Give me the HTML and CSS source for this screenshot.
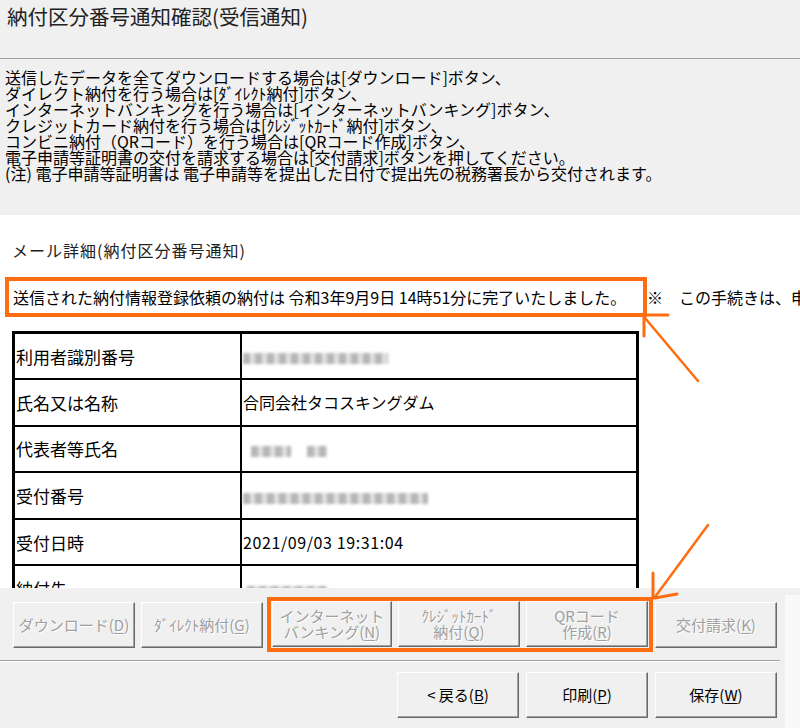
FILE: index.html
```html
<!DOCTYPE html>
<html lang="ja">
<head>
    <meta charset="UTF-8">
    <meta name="viewport" content="width=device-width, initial-scale=1.0">
    <title>納付区分番号通知確認(受信通知)</title>
    <link rel="stylesheet" href="styles.css">
</head>

<body>
    <div class="title-bar">
        <h1>納付区分番号通知確認(受信通知)</h1>
    </div>

    <div class="notes">
        <p>送信したデータを全てダウンロードする場合は[ダウンロード]ボタン、</p>
        <p>ダイレクト納付を行う場合は[ﾀﾞｲﾚｸﾄ納付]ボタン、</p>
        <p>インターネットバンキングを行う場合は[インターネットバンキング]ボタン、</p>
        <p>クレジットカード納付を行う場合は[ｸﾚｼﾞｯﾄｶｰﾄﾞ納付]ボタン、</p>
        <p>コンビニ納付（QRコード）を行う場合は[QRコード作成]ボタン、</p>
        <p>電子申請等証明書の交付を請求する場合は[交付請求]ボタンを押してください。</p>
        <p>(注) 電子申請等証明書は 電子申請等を提出した日付で提出先の税務署長から交付されます。</p>
    </div>

    <div class="mail-pane">
        <h2>メール詳細(納付区分番号通知)</h2>
        <p class="result"><span class="mark">送信された納付情報登録依頼の納付は 令和3年9月9日 14時51分に完了いたしました。</span>※　この手続きは、申請等の内容の審査を行うものではありません。</p>

        <table class="detail">
            <tr>
                <th>利用者識別番号</th>
                <td><span class="blur w145"></span></td>
            </tr>
            <tr>
                <th>氏名又は名称</th>
                <td>合同会社タコスキングダム</td>
            </tr>
            <tr>
                <th>代表者等氏名</th>
                <td><span class="blur w40 ml8"></span><span class="blur w20 ml16"></span></td>
            </tr>
            <tr>
                <th>受付番号</th>
                <td><span class="blur w185"></span></td>
            </tr>
            <tr>
                <th>受付日時</th>
                <td class="stamp">2021/09/03 19:31:04</td>
            </tr>
            <tr>
                <th>納付先</th>
                <td><span class="blur w80 ml4"></span></td>
            </tr>
        </table>
    </div>

    <div class="footer">
        <div class="actions">
            <div class="action-row">
                <button disabled>ダウンロード(<u>D</u>)</button>
                <button disabled>ﾀﾞｲﾚｸﾄ納付(<u>G</u>)</button>
                <div class="mark-group">
                    <button class="narrow" disabled>インターネット<br>バンキング(<u>N</u>)</button>
                    <button disabled>ｸﾚｼﾞｯﾄｶｰﾄﾞ<br>納付(<u>Q</u>)</button>
                    <button disabled>QRコード<br>作成(<u>R</u>)</button>
                </div>
                <button disabled>交付請求(<u>K</u>)</button>
            </div>
            <hr class="etched">
            <div class="action-row nav-row">
                <button>&lt;&nbsp;戻る(<u>B</u>)</button>
                <button>印刷(<u>P</u>)</button>
                <button>保存(<u>W</u>)</button>
            </div>
        </div>
        <div class="backdrop"></div>
    </div>

    <!-- orange callout arrows drawn over the dialog -->
    <svg class="annotations" width="800" height="728" viewBox="0 0 800 728">
        <g stroke="#ff6d12" fill="none" stroke-linecap="round">
            <path d="M645 318 L698 381" stroke-width="2.5"/>
            <path d="M645 315 H668" stroke-width="3"/>
            <path d="M644 317 V336" stroke-width="3"/>
            <path d="M708 525 L655 597" stroke-width="2.5"/>
            <path d="M653 598 V573" stroke-width="3"/>
            <path d="M655 598 L677 594" stroke-width="3"/>
        </g>
    </svg>
</body>

</html>
```

FILE: styles.css
```css
body {
    font-family: "Noto Sans CJK JP", sans-serif;
    background-color: #f0f0f0;
    color: #000;
    margin: 0;
    width: 800px;
    height: 728px;
    overflow: hidden;
    position: relative;
}

p {
    margin: 0;
}

.title-bar {
    height: 58px;
    border-bottom: 1px solid #a0a0a0;
}

.title-bar h1 {
    margin: 0;
    padding: 3px 0 0 7px;
    font-size: 20.5px;
    font-weight: normal;
    line-height: 26px;
    color: #222;
}

.notes {
    box-sizing: border-box;
    height: 156px;
    padding: 10px 0 0 5px;
    font-size: 16px;
    line-height: 16px;
    white-space: nowrap;
}

.mail-pane {
    box-sizing: border-box;
    height: 373px;
    padding-top: 25px;
    background-color: #fff;
    overflow: hidden;
}

.mail-pane h2 {
    margin: 0 0 0 12px;
    font-size: 16px;
    font-weight: normal;
    line-height: 20px;
    letter-spacing: 1px;
    color: #222;
}

.result {
    margin-top: 17px;
    font-size: 16px;
    line-height: 32px;
    white-space: nowrap;
}

.mark {
    display: inline-block;
    box-sizing: border-box;
    width: 642px;
    margin-left: 5px;
    padding-left: 4px;
    border: 4px solid #ff6d12;
}

.detail {
    margin: 14px 0 0 12px;
    width: 627px;
    border-collapse: collapse;
    border: 3px solid #000;
}

.detail tr {
    height: 46.6px;
}

.detail th,
.detail td {
    padding: 0;
    border: 2px solid #000;
    text-align: left;
    font-weight: normal;
    white-space: nowrap;
}

.detail th {
    width: 224px;
    padding-left: 1px;
    font-size: 17px;
}

.detail td {
    padding-left: 1px;
    font-size: 16px;
}

.detail .stamp {
    font-size: 16px;
    letter-spacing: 0.6px;
}

.blur {
    display: inline-block;
    height: 11px;
    vertical-align: middle;
    background: repeating-linear-gradient(90deg, #b5b5b5 0 7px, #e0e0e0 7px 12px);
    filter: blur(1.6px);
}

.w20 { width: 20px; }
.w40 { width: 40px; }
.w80 { width: 80px; }
.w145 { width: 145px; }
.w185 { width: 185px; }
.ml4 { margin-left: 4px; }
.ml8 { margin-left: 8px; }
.ml16 { margin-left: 16px; }

.footer {
    display: flex;
    height: 140px;
}

.actions {
    width: 785px;
}

.backdrop {
    flex: 1;
    margin-top: 7px;
    background-color: #f9f9f9;
}

.action-row {
    display: flex;
    align-items: center;
    gap: 6px;
    padding: 9px 0 0 13px;
}

button {
    box-sizing: border-box;
    width: 122px;
    height: 46px;
    padding: 0;
    font-family: "Noto Sans CJK JP", sans-serif;
    font-size: 15px;
    line-height: 16px;
    color: #000;
    background-color: #f0f0f0;
    border: 1px solid;
    border-color: #fff #696969 #696969 #fff;
    box-shadow: inset -1px -1px 0 #a0a0a0;
}

button:disabled {
    color: #a0a0a0;
    text-shadow: 1px 1px 0 #fff;
}

button u {
    text-underline-offset: 2px;
}

.mark-group {
    display: flex;
    gap: 6px;
    margin: 0 -4px 0 -2px;
    padding: 0 1px 1px 1px;
    border: 4px solid #ff6d12;
}

.mark-group .narrow {
    width: 120px;
}

.etched {
    width: 780px;
    margin: 8px 0 0 0;
    border: none;
    border-top: 1px solid #a0a0a0;
    border-bottom: 1px solid #fff;
}

.nav-row {
    justify-content: flex-end;
    gap: 7px;
    padding: 10px 8px 0 0;
}

.annotations {
    position: absolute;
    top: 0;
    left: 0;
    pointer-events: none;
}
```
